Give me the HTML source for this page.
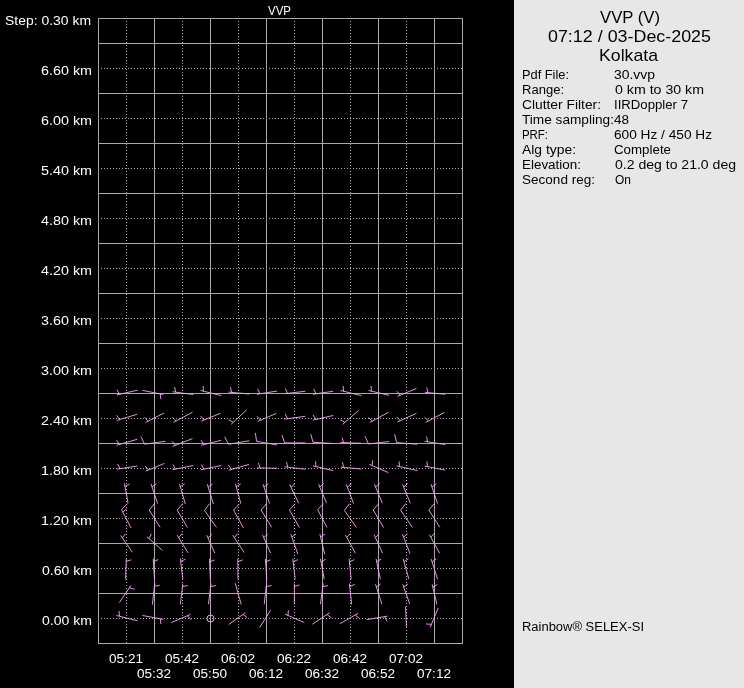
<!DOCTYPE html><html><head><meta charset="utf-8"><style>html,body{margin:0;padding:0;background:#000;width:744px;height:688px;overflow:hidden}svg{display:block}text{font-family:"Liberation Sans", sans-serif}</style></head><body><svg width="744" height="688" viewBox="0 0 744 688"><rect x="0" y="0" width="744" height="688" fill="#000"/><rect x="514" y="0" width="230" height="688" fill="#e7e7e7"/><g shape-rendering="crispEdges" stroke-width="1"><path d="M101 68.5H462" stroke="#b0b0b0" stroke-dasharray="1 2"/><path d="M101 118.5H462" stroke="#b0b0b0" stroke-dasharray="1 2"/><path d="M101 168.5H462" stroke="#b0b0b0" stroke-dasharray="1 2"/><path d="M101 218.5H462" stroke="#b0b0b0" stroke-dasharray="1 2"/><path d="M101 268.5H462" stroke="#b0b0b0" stroke-dasharray="1 2"/><path d="M101 318.5H462" stroke="#b0b0b0" stroke-dasharray="1 2"/><path d="M101 368.5H462" stroke="#b0b0b0" stroke-dasharray="1 2"/><path d="M101 418.5H462" stroke="#b0b0b0" stroke-dasharray="1 2"/><path d="M101 468.5H462" stroke="#b0b0b0" stroke-dasharray="1 2"/><path d="M101 518.5H462" stroke="#b0b0b0" stroke-dasharray="1 2"/><path d="M101 568.5H462" stroke="#b0b0b0" stroke-dasharray="1 2"/><path d="M101 618.5H462" stroke="#b0b0b0" stroke-dasharray="1 2"/><path d="M126.5 21V643" stroke="#b0b0b0" stroke-dasharray="1 2"/><path d="M182.5 21V643" stroke="#b0b0b0" stroke-dasharray="1 2"/><path d="M238.5 21V643" stroke="#b0b0b0" stroke-dasharray="1 2"/><path d="M294.5 21V643" stroke="#b0b0b0" stroke-dasharray="1 2"/><path d="M350.5 21V643" stroke="#b0b0b0" stroke-dasharray="1 2"/><path d="M406.5 21V643" stroke="#b0b0b0" stroke-dasharray="1 2"/><path d="M98 43.5H462M98 93.5H462M98 143.5H462M98 193.5H462M98 243.5H462M98 293.5H462M98 343.5H462M98 393.5H462M98 443.5H462M98 493.5H462M98 543.5H462M98 593.5H462M154.5 18V643M210.5 18V643M266.5 18V643M322.5 18V643M378.5 18V643M434.5 18V643M98.5 18.5H462.5V643.5H98.5Z" stroke="#a8a8a8" fill="none"/></g><g style="will-change:transform"><text x="268.0" y="15" font-size="12.5" fill="#fff" textLength="23.0" lengthAdjust="spacingAndGlyphs">VVP</text><text x="5.0" y="25" font-size="12.5" fill="#fff" textLength="86.0" lengthAdjust="spacingAndGlyphs">Step: 0.30 km</text><text x="40.98" y="75" font-size="12.5" fill="#fff" textLength="51.04" lengthAdjust="spacingAndGlyphs">6.60 km</text><text x="40.98" y="125" font-size="12.5" fill="#fff" textLength="51.04" lengthAdjust="spacingAndGlyphs">6.00 km</text><text x="40.98" y="175" font-size="12.5" fill="#fff" textLength="51.04" lengthAdjust="spacingAndGlyphs">5.40 km</text><text x="41" y="225" font-size="12.5" fill="#fff" textLength="51" lengthAdjust="spacingAndGlyphs">4.80 km</text><text x="41" y="275" font-size="12.5" fill="#fff" textLength="51" lengthAdjust="spacingAndGlyphs">4.20 km</text><text x="40.98" y="325" font-size="12.5" fill="#fff" textLength="51.04" lengthAdjust="spacingAndGlyphs">3.60 km</text><text x="40.98" y="375" font-size="12.5" fill="#fff" textLength="51.04" lengthAdjust="spacingAndGlyphs">3.00 km</text><text x="40.98" y="425" font-size="12.5" fill="#fff" textLength="51.04" lengthAdjust="spacingAndGlyphs">2.40 km</text><text x="40.98" y="475" font-size="12.5" fill="#fff" textLength="51.04" lengthAdjust="spacingAndGlyphs">1.80 km</text><text x="40.98" y="525" font-size="12.5" fill="#fff" textLength="51.04" lengthAdjust="spacingAndGlyphs">1.20 km</text><text x="42" y="575" font-size="12.5" fill="#fff" textLength="50" lengthAdjust="spacingAndGlyphs">0.60 km</text><text x="42" y="625" font-size="12.5" fill="#fff" textLength="50" lengthAdjust="spacingAndGlyphs">0.00 km</text><text x="109.0" y="663" font-size="12.5" fill="#fff" textLength="34.0" lengthAdjust="spacingAndGlyphs">05:21</text><text x="137.0" y="678" font-size="12.5" fill="#fff" textLength="34.0" lengthAdjust="spacingAndGlyphs">05:32</text><text x="165.0" y="663" font-size="12.5" fill="#fff" textLength="34.0" lengthAdjust="spacingAndGlyphs">05:42</text><text x="193.0" y="678" font-size="12.5" fill="#fff" textLength="34.0" lengthAdjust="spacingAndGlyphs">05:50</text><text x="221.0" y="663" font-size="12.5" fill="#fff" textLength="34.0" lengthAdjust="spacingAndGlyphs">06:02</text><text x="249.0" y="678" font-size="12.5" fill="#fff" textLength="34.0" lengthAdjust="spacingAndGlyphs">06:12</text><text x="277.0" y="663" font-size="12.5" fill="#fff" textLength="34.0" lengthAdjust="spacingAndGlyphs">06:22</text><text x="305.0" y="678" font-size="12.5" fill="#fff" textLength="34.0" lengthAdjust="spacingAndGlyphs">06:32</text><text x="333.0" y="663" font-size="12.5" fill="#fff" textLength="34.0" lengthAdjust="spacingAndGlyphs">06:42</text><text x="361.0" y="678" font-size="12.5" fill="#fff" textLength="34.0" lengthAdjust="spacingAndGlyphs">06:52</text><text x="389.0" y="663" font-size="12.5" fill="#fff" textLength="34.0" lengthAdjust="spacingAndGlyphs">07:02</text><text x="417.0" y="678" font-size="12.5" fill="#fff" textLength="34.0" lengthAdjust="spacingAndGlyphs">07:12</text><text x="600" y="23" font-size="16.6" fill="#000" textLength="60" lengthAdjust="spacingAndGlyphs">VVP (V)</text><text x="547.99" y="42" font-size="16.6" fill="#000" textLength="163.01" lengthAdjust="spacingAndGlyphs">07:12 / 03-Dec-2025</text><text x="599.0" y="61" font-size="16.6" fill="#000" textLength="59.0" lengthAdjust="spacingAndGlyphs">Kolkata</text><text x="521.98" y="79" font-size="12.5" fill="#000" textLength="47.05" lengthAdjust="spacingAndGlyphs">Pdf File:</text><text x="614.0" y="79" font-size="12.5" fill="#000" textLength="41.0" lengthAdjust="spacingAndGlyphs">30.vvp</text><text x="521.97" y="94" font-size="12.5" fill="#000" textLength="42.05" lengthAdjust="spacingAndGlyphs">Range:</text><text x="615" y="94" font-size="12.5" fill="#000" textLength="89" lengthAdjust="spacingAndGlyphs">0 km to 30 km</text><text x="521.99" y="109" font-size="12.5" fill="#000" textLength="79.03" lengthAdjust="spacingAndGlyphs">Clutter Filter:</text><text x="614.0" y="109" font-size="12.5" fill="#000" textLength="74.0" lengthAdjust="spacingAndGlyphs">IIRDoppler 7</text><text x="522" y="124" font-size="12.5" fill="#000" textLength="92" lengthAdjust="spacingAndGlyphs">Time sampling:</text><text x="614.0" y="124" font-size="12.5" fill="#000" textLength="15.0" lengthAdjust="spacingAndGlyphs">48</text><text x="521.96" y="139" font-size="12.5" fill="#000" textLength="26.09" lengthAdjust="spacingAndGlyphs">PRF:</text><text x="614.0" y="139" font-size="12.5" fill="#000" textLength="98.0" lengthAdjust="spacingAndGlyphs">600 Hz / 450 Hz</text><text x="522" y="154" font-size="12.5" fill="#000" textLength="54" lengthAdjust="spacingAndGlyphs">Alg type:</text><text x="614.0" y="154" font-size="12.5" fill="#000" textLength="57.0" lengthAdjust="spacingAndGlyphs">Complete</text><text x="521.98" y="169" font-size="12.5" fill="#000" textLength="59.04" lengthAdjust="spacingAndGlyphs">Elevation:</text><text x="615" y="169" font-size="12.5" fill="#000" textLength="121" lengthAdjust="spacingAndGlyphs">0.2 deg to 21.0 deg</text><text x="521.99" y="184" font-size="12.5" fill="#000" textLength="73.03" lengthAdjust="spacingAndGlyphs">Second reg:</text><text x="615" y="184" font-size="12.5" fill="#000" textLength="16" lengthAdjust="spacingAndGlyphs">On</text><text x="521.99" y="631" font-size="12.5" fill="#000" textLength="122.02" lengthAdjust="spacingAndGlyphs">Rainbow® SELEX-SI</text></g><path d="M116.69 394.93L137.61 390.17M119.62 394.27l-2.72 -4.55 M116.69 420.51L137.01 414.29M119.56 419.63l-3.04 -4.34 M116.59 445.32L137.31 439.28M119.47 444.48l-2.98 -4.38 M117.05 469.15L137.3 466.05M120.01 468.7l-2.38 -4.73 M124.45 483.4L128.05 503.2M124.99 486.35l4.67 -2.51 M121.54 509.67L131.06 527.93M121.54 509.67l5.95 -6.07M122.93 512.33l3.71 -3.78 M120.67 535.45L132.33 552.25M122.38 537.91l3.21 -4.22 M126.29 558.3L125.61 579.4M126.19 561.3l5.09 -1.47 M131.03 585.3L119.37 602.55M129.35 587.78l5.09 1.47 M116.49 615.47L137.41 620.73M119.4 616.2l-0.36 -5.29 M163.21 394.54L142.49 390.36M160.27 393.95l0.61 5.27 M145.67 422.46L164.03 413.04M148.34 421.09l-3.76 -3.74 M144.55 444.16L165.4 441.29M144.55 444.16l-3.7 -7.65 M145.78 471.14L164.42 463.41M148.55 469.99l-3.44 -4.03 M151.09 483.98L157.61 503.62M152.04 486.83l4.27 -3.14 M149.16 510.05L160.14 527.35M149.16 510.05l5.42 -6.55 M146.92 536.7L162.38 550.4M149.17 538.69l2.12 -4.86 M153.22 558.5L154.48 579.2M153.4 561.49l4.93 -1.94 M154.86 583.3L152.34 604.7M154.51 586.28l5.2 -1.03 M163.21 619.44L142.49 615.46M160.26 618.88l0.66 5.26 M172.6 391.74L193.3 394.56M175.57 392.15l-0.94 -5.22 M173.46 422.36L192.49 412.24M176.11 420.95l-3.81 -3.68 M172.58 446.39L192.47 438.61M175.37 445.3l-3.36 -4.1 M172.59 469.74L193.31 465.46M175.53 469.13l-2.62 -4.61 M179.48 483.79L185.32 504.01M180.31 486.67l4.39 -2.97 M177.15 510.06L187.45 527.54M177.15 510.06l5.63 -6.37 M177.16 535.16L188.04 552.84M178.73 537.71l3.43 -4.04 M180.34 558.5L182.86 579.2M180.7 561.48l4.81 -2.24 M182.86 583.6L180.34 604.3M182.5 586.58l5.2 -1.01 M190.32 614.52L171.38 622.58M187.56 615.69l3.48 4 M200.54 390.47L221.21 395.63M203.45 391.2l-0.37 -5.29 M201.38 421.14L220.42 413.31M204.15 420l-3.43 -4.04 M200.99 445.33L221.21 440.27M203.9 444.6l-2.81 -4.49 M200.99 469.74L221.41 465.46M203.93 469.12l-2.64 -4.6 M207.29 484.19L213.41 504.01M208.17 487.05l4.33 -3.05 M204.47 510.44L216.53 527.36M204.47 510.44l5.06 -6.83 M206.72 535.17L214.78 553.13M207.95 537.91l3.93 -3.56 M209.51 558.8L210.39 579.7M209.64 561.8l4.97 -1.85 M211.06 583.6L208.44 604.3M210.69 586.57l5.21 -0.99 M228.6 392.13L249.3 393.97M231.59 392.39l-1.18 -5.17 M231.02 424.4L246.48 410M233.22 422.35l-4.63 -2.57 M228.6 444.25L249.3 440.75M228.6 444.25l-3.94 -7.53 M228.59 470.32L248.91 464.38M231.47 469.48l-2.98 -4.38 M235.48 483.79L240.82 503.61M236.26 486.69l4.44 -2.89 M233.55 510.06L243.45 527.94M233.55 510.06l5.8 -6.22 M232.77 535.15L244.23 552.55M234.42 537.66l3.31 -4.14 M237.8 558.6L238 579.3M237.83 561.6l5.02 -1.69 M235.28 583.29L241.22 604.51 M245.36 612.67L228.74 624.53M242.91 614.42l4.26 3.15 M257 394.25L277.2 391.05M259.96 393.78l-2.41 -4.72 M257.78 421.38L276.42 413.42M260.53 420.2l-3.49 -3.99 M256.55 441.3L277.2 444.95M256.55 441.3l-1.18 -8.42 M257 467.91L277.2 468.29M260 467.96l-1.54 -5.07 M263 484.18L269.6 503.62M263.96 487.02l4.25 -3.17 M261.06 510.06L271.74 527.34M261.06 510.06l5.5 -6.48 M262.52 534.77L270.58 553.13M263.73 537.52l3.96 -3.53 M265.42 558.8L266.78 579.7M265.61 561.79l4.92 -1.96 M266.57 583.6L264.23 604.3M266.23 586.58l5.19 -1.06 M270.64 610.25L259.56 627.65 M284.6 393.72L305.3 391.28M287.58 393.37l-2.21 -4.82 M284.6 419.16L305.3 416.29M287.57 418.75l-2.31 -4.77 M284.6 442.9L305.3 442.9M284.6 442.9l-2.63 -8.08 M284.6 466.74L305.3 469.26M287.58 467.1l-1.01 -5.2 M289.73 484.57L298.67 503.23M291.03 487.28l3.84 -3.66 M289.45 510.06L299.45 527.54M289.45 510.06l5.71 -6.29 M290.9 534.18L297.8 554.02M291.88 537.02l4.22 -3.2 M292.83 558.8L295.17 579.2M293.17 561.78l4.82 -2.2 M294.4 583.6L294.4 604.3M294.4 586.6l5.04 -1.64 M285.17 614.22L304.33 622.58M287.92 615.42l0.52 -5.27 M313 394.26L333.2 391.29M315.97 393.82l-2.35 -4.75 M312.99 420.13L333.21 415.47M315.92 419.46l-2.73 -4.54 M313 442.32L333.2 443.48M313 442.32l-2.16 -8.22 M312.99 465.77L333.21 470.73M315.91 466.49l-0.39 -5.29 M318.62 484.18L326.58 503.22M319.77 486.94l4.02 -3.46 M317.64 509.67L326.96 527.53M317.64 509.67l5.95 -6.07 M319.87 533.99L324.73 554.31M320.57 536.91l4.52 -2.77 M320.45 558.79L324.25 579.21M321 561.74l4.66 -2.53 M323.26 583.6L320.44 604.3M322.85 586.57l5.22 -0.94 M329.55 612.87L312.35 624.23M327.05 614.52l4.15 3.3 M340.59 390.47L361.31 395.63M343.5 391.2l-0.37 -5.29 M342.63 424.4L358.47 410.6M344.89 422.43l-4.55 -2.72 M340.5 442.51L361.3 443.29M343.5 442.62l-1.45 -5.1 M340.6 467.13L361.3 468.97M343.59 467.39l-1.18 -5.17 M346.31 484.18L353.59 503.62M347.36 486.99l4.14 -3.3 M344.37 510.44L356.43 527.36M344.37 510.44l5.06 -6.83 M345.34 534.76L355.36 553.14M346.78 537.4l3.64 -3.85 M349.13 558.8L351.17 579.2M349.43 561.78l4.85 -2.13 M349.43 583.6L351.67 604.3M349.75 586.58l4.84 -2.17 M357.94 613.35L339.96 623.75M355.34 614.85l3.94 3.54 M368.54 390.47L389.21 395.33M371.46 391.16l-0.44 -5.28 M369.76 422.56L388.44 412.24M372.39 421.11l-3.87 -3.62 M368.55 443.96L389.2 441.54M368.55 443.96l-3.55 -7.72 M369.38 464.42L388.42 472.58M372.13 465.6l0.48 -5.28 M374.42 484.18L382.38 503.22M375.57 486.94l4.02 -3.46 M373.15 509.86L383.55 527.54M373.15 509.86l5.64 -6.36 M374.13 534.77L382.57 553.13M375.38 537.5l3.89 -3.6 M376.06 558.79L380.34 579.21M376.68 561.73l4.6 -2.64 M375.49 584.19L381.81 604.01M376.4 587.04l4.31 -3.09 M387.5 616.15L366.8 619.55M384.54 616.64l2.43 4.71 M397.48 396.38L416.47 388.42M400.24 395.22l-3.46 -4.01 M397.47 421.98L416.48 413.32M400.2 420.73l-3.58 -3.91 M396.6 442.53L417.3 444.27M396.6 442.53l-1.94 -8.28 M396.59 465.87L417.31 470.63M399.52 466.54l-0.47 -5.28 M402.51 484.18L410.29 503.22M403.65 486.96l4.05 -3.42 M400.67 510.25L412.43 527.35M400.67 510.25l5.17 -6.74 M402.51 534.28L409.99 553.62M403.59 537.08l4.11 -3.35 M403.18 558.79L408.82 579.01M403.99 561.68l4.42 -2.93 M402.7 584.28L409.7 603.82M403.71 587.11l4.19 -3.24 M405.51 606.6L406.49 627.1 M425 392.33L445.2 394.27M427.98 392.62l-1.15 -5.17 M425.76 422.36L444.44 412.44M428.41 420.95l-3.81 -3.68 M424.55 441.3L445.2 444.55M427.51 441.76l-0.83 -5.23 M424.54 466.06L445.21 470.14M427.49 466.64l-0.63 -5.26 M431 484.18L437.6 503.62M431.96 487.02l4.25 -3.17 M428.86 510.05L439.84 527.35M428.86 510.05l5.42 -6.55 M429.34 534.56L439.66 553.34M430.79 537.19l3.63 -3.86 M431.19 559.09L437.51 579.01M432.1 561.95l4.31 -3.08 M432.17 584.29L436.83 604.31M432.85 587.21l4.54 -2.74 M430.31 627.12L438.29 607.78M431.46 624.35l-5.28 -0.41" stroke="#ffa4ff" stroke-width="0.9" fill="none"/><g stroke="#ffa4ff" fill="none"><circle cx="210.5" cy="618.5" r="3.5"/></g></svg></body></html>
